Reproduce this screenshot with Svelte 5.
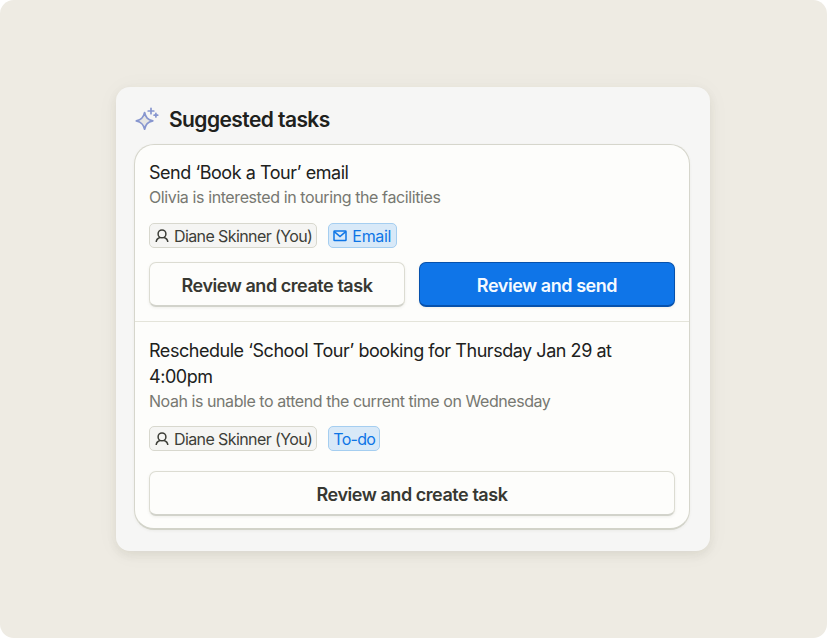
<script>
  const tasks = [
    {
      title: 'Send ‘Book a Tour’ email',
      note: 'Olivia is interested in touring the facilities',
      assignee: 'Diane Skinner (You)',
      type: 'Email',
      canSend: true
    },
    {
      title: 'Reschedule ‘School Tour’ booking for Thursday Jan 29 at 4:00pm',
      note: 'Noah is unable to attend the current time on Wednesday',
      assignee: 'Diane Skinner (You)',
      type: 'To-do',
      canSend: false
    }
  ];
</script>

<main>
  <section class="panel">
    <header>
      <svg class="sparkle" width="26" height="26" viewBox="0 0 26 26">
        <path class="star" d="M10.6 6.5C11.7 11.6 13.6 13.6 18.8 14.9C13.6 16.2 11.8 18.2 10.6 23.2C9.4 18.2 7.4 16.2 2.3 14.9C7.4 13.6 9.5 11.6 10.6 6.5Z" />
        <path class="plus" d="M17 2.3V7.7M14.2 5H19.8M21.9 7.4V11M20.1 9.2H23.7" />
      </svg>
      <h2>Suggested tasks</h2>
    </header>

    <div class="card">
      {#each tasks as task}
        <article class:compact={task.canSend}>
          <h3>{task.title}</h3>
          <p>{task.note}</p>

          <div class="chips">
            <span class="chip person">
              <svg width="14" height="14" viewBox="0 0 14 14">
                <circle cx="7" cy="4.9" r="3.9" />
                <path d="M1.2 13C1.4 10.3 2.8 9 5.2 8.4M12.8 13C12.6 10.3 11.2 9 8.8 8.4" />
              </svg>
              <span class="label">{task.assignee}</span>
            </span>
            <span class="chip type" class:todo={!task.canSend}>
              {#if task.canSend}
                <svg class="mail" width="14" height="12" viewBox="0 0 14 12">
                  <rect x="1" y="1" width="12" height="9.5" rx="0.6" />
                  <path d="M1.3 1.6L7 6.5L12.7 1.6" />
                </svg>
              {/if}
              <span class="label">{task.type}</span>
            </span>
          </div>

          <div class="actions">
            <button>Review and create task</button>
            {#if task.canSend}
              <button class="primary">Review and send</button>
            {/if}
          </div>
        </article>
      {/each}
    </div>
  </section>
</main>

<style>
  :global(body) {
    background: #fff;
  }

  main {
    box-sizing: border-box;
    width: 827px;
    height: 638px;
    padding: 87px 117px 0 116px;
    border-radius: 14px;
    background: #eeebe3;
    font-family: Inter, 'Liberation Sans', sans-serif;
    overflow: hidden;
  }

  .panel {
    box-sizing: border-box;
    height: 464px;
    padding: 0 20px 0 18px;
    border-radius: 14px;
    background: #f6f6f5;
    box-shadow: 0 4px 10px rgba(70, 70, 40, 0.09), 0 2px 24px rgba(70, 70, 40, 0.04);
  }

  header {
    display: flex;
    align-items: center;
    height: 57px;
    padding-top: 1px;
    box-sizing: border-box;
  }

  .sparkle {
    margin: 6px 9px 0 0;
    fill: none;
    stroke: #8796cf;
    stroke-width: 1.7;
    stroke-linecap: round;
    stroke-linejoin: round;
  }

  .star {
    fill: #e6e6e4;
  }

  h2 {
    margin: 7px 0 0;
    font-size: 21px;
    font-weight: 600;
    letter-spacing: -0.58px;
    color: #20211c;
  }

  .card {
    box-sizing: border-box;
    height: 386px;
    border: 1px solid #d6d6cc;
    border-bottom: 2px solid #d2d3c9;
    border-radius: 20px;
    background: #fdfdfb;
    box-shadow: 0 1px 3px rgba(70, 70, 40, 0.06);
  }

  article {
    padding: 16px 14px 11px;
  }

  article.compact {
    padding: 15px 14px 14px;
    border-bottom: 1px solid #e4e4da;
  }

  h3 {
    margin: 0;
    font-size: 18px;
    font-weight: 400;
    line-height: 26px;
    letter-spacing: -0.46px;
    color: #20211c;
  }

  p {
    margin: -1px 0 0;
    font-size: 16px;
    line-height: 24px;
    letter-spacing: -0.44px;
    color: #777871;
  }

  .compact p {
    letter-spacing: -0.4px;
  }

  .chips {
    display: flex;
    gap: 11px;
    margin-top: 13px;
  }

  .compact .chips {
    margin-top: 14px;
  }

  .chip {
    box-sizing: border-box;
    display: flex;
    align-items: center;
    height: 25px;
    padding: 0 4px 0 5px;
    border: 1px solid #d8d8ce;
    border-radius: 5px;
    background: #f5f5f3;
    font-size: 16px;
    letter-spacing: -0.6px;
    color: #3d3e38;
    white-space: nowrap;
  }

  .chip svg {
    margin-right: 5px;
    fill: none;
    stroke: #3d3e38;
    stroke-width: 1.5;
  }

  .type {
    padding: 0 5px 0 4px;
    border-color: #a5cef0;
    background: #d8e9f8;
    letter-spacing: -0.3px;
    color: #0d75e6;
  }

  .todo {
    padding-right: 4px;
    letter-spacing: -0.7px;
  }

  .chip .mail {
    stroke: #0d75e6;
  }

  .actions {
    display: flex;
    gap: 14px;
    margin-top: 14px;
  }

  article:not(.compact) .actions {
    margin-top: 20px;
  }

  button {
    box-sizing: border-box;
    flex: 1;
    height: 45px;
    padding: 2px 0 0;
    border: 1px solid #dcdcd2;
    border-bottom: 2px solid #d2d3cb;
    border-radius: 7px;
    background: #fdfdfb;
    box-shadow: 0 1px 3px rgba(70, 70, 40, 0.08);
    font-family: inherit;
    font-size: 18px;
    font-weight: 600;
    letter-spacing: -0.45px;
    color: #373832;
  }

  .primary {
    border-color: #0651ac;
    background: #0f75e8;
    color: #f5faff;
  }
</style>
